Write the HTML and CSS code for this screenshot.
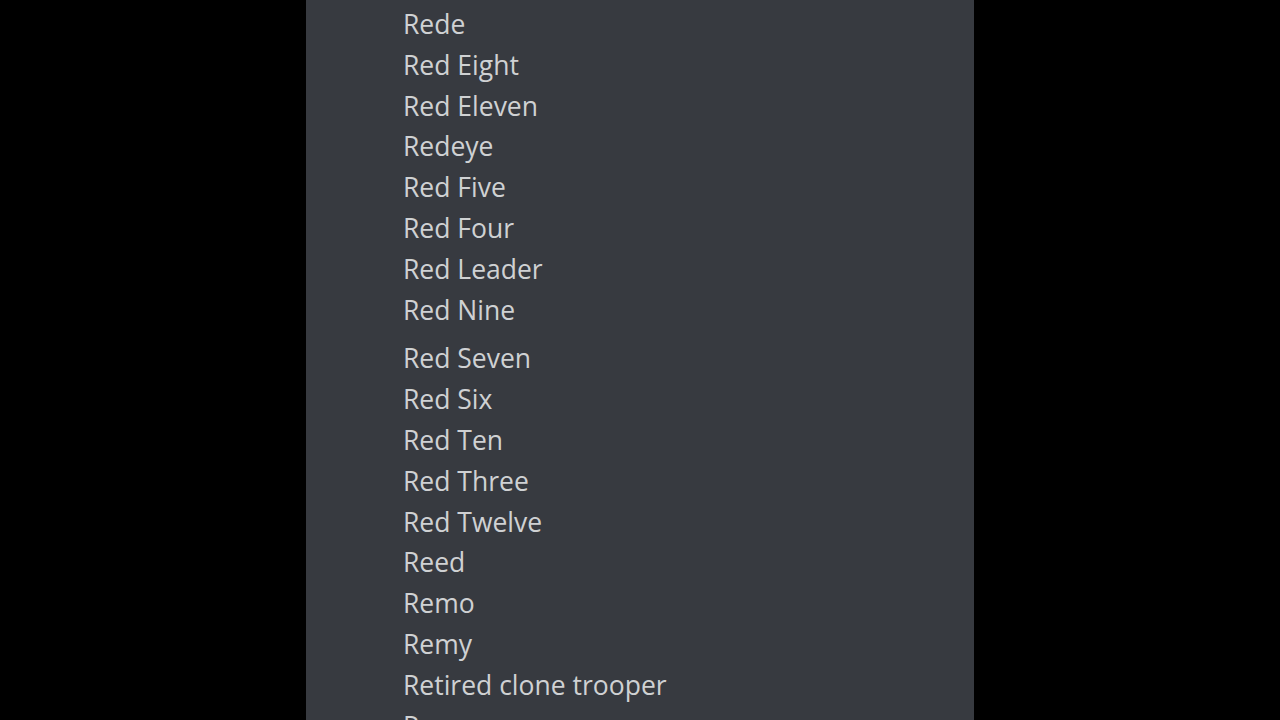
FILE: index.html
```html
<!DOCTYPE html>
<html lang="en">
<head>
  <meta charset="UTF-8" />
  <title>Members</title>
  <link rel="stylesheet" href="styles.css">
</head>
<body>
  <div class="panel">
    <ul class="names">
      <li>Rede</li>
      <li>Red Eight</li>
      <li>Red Eleven</li>
      <li>Redeye</li>
      <li>Red Five</li>
      <li>Red Four</li>
      <li>Red Leader</li>
      <li class="gap-after">Red Nine</li>
      <li>Red Seven</li>
      <li>Red Six</li>
      <li>Red Ten</li>
      <li>Red Three</li>
      <li>Red Twelve</li>
      <li>Reed</li>
      <li>Remo</li>
      <li>Remy</li>
      <li>Retired clone trooper</li>
      <li>Rex</li>
    </ul>
  </div>
</body>
</html>
```

FILE: styles.css
```css
* {
  box-sizing: border-box;
  margin: 0;
  padding: 0;
}

html, body {
  height: 100%;
}

body {
  background: #000;
  display: flex;
  justify-content: center;
  overflow: hidden;
  font-family: 'Open Sans', 'Noto Sans', sans-serif;
}

.panel {
  width: 668px;
  height: 100%;
  background: #373a40;
  padding: 4px 0 0 97px;
  overflow: hidden;
}

.names {
  list-style: none;
}

.names li {
  font-size: 26.5px;
  line-height: 40.8px;
  color: #cfd1d3;
  white-space: nowrap;
}

.names li.gap-after {
  margin-bottom: 8px;
}
```
